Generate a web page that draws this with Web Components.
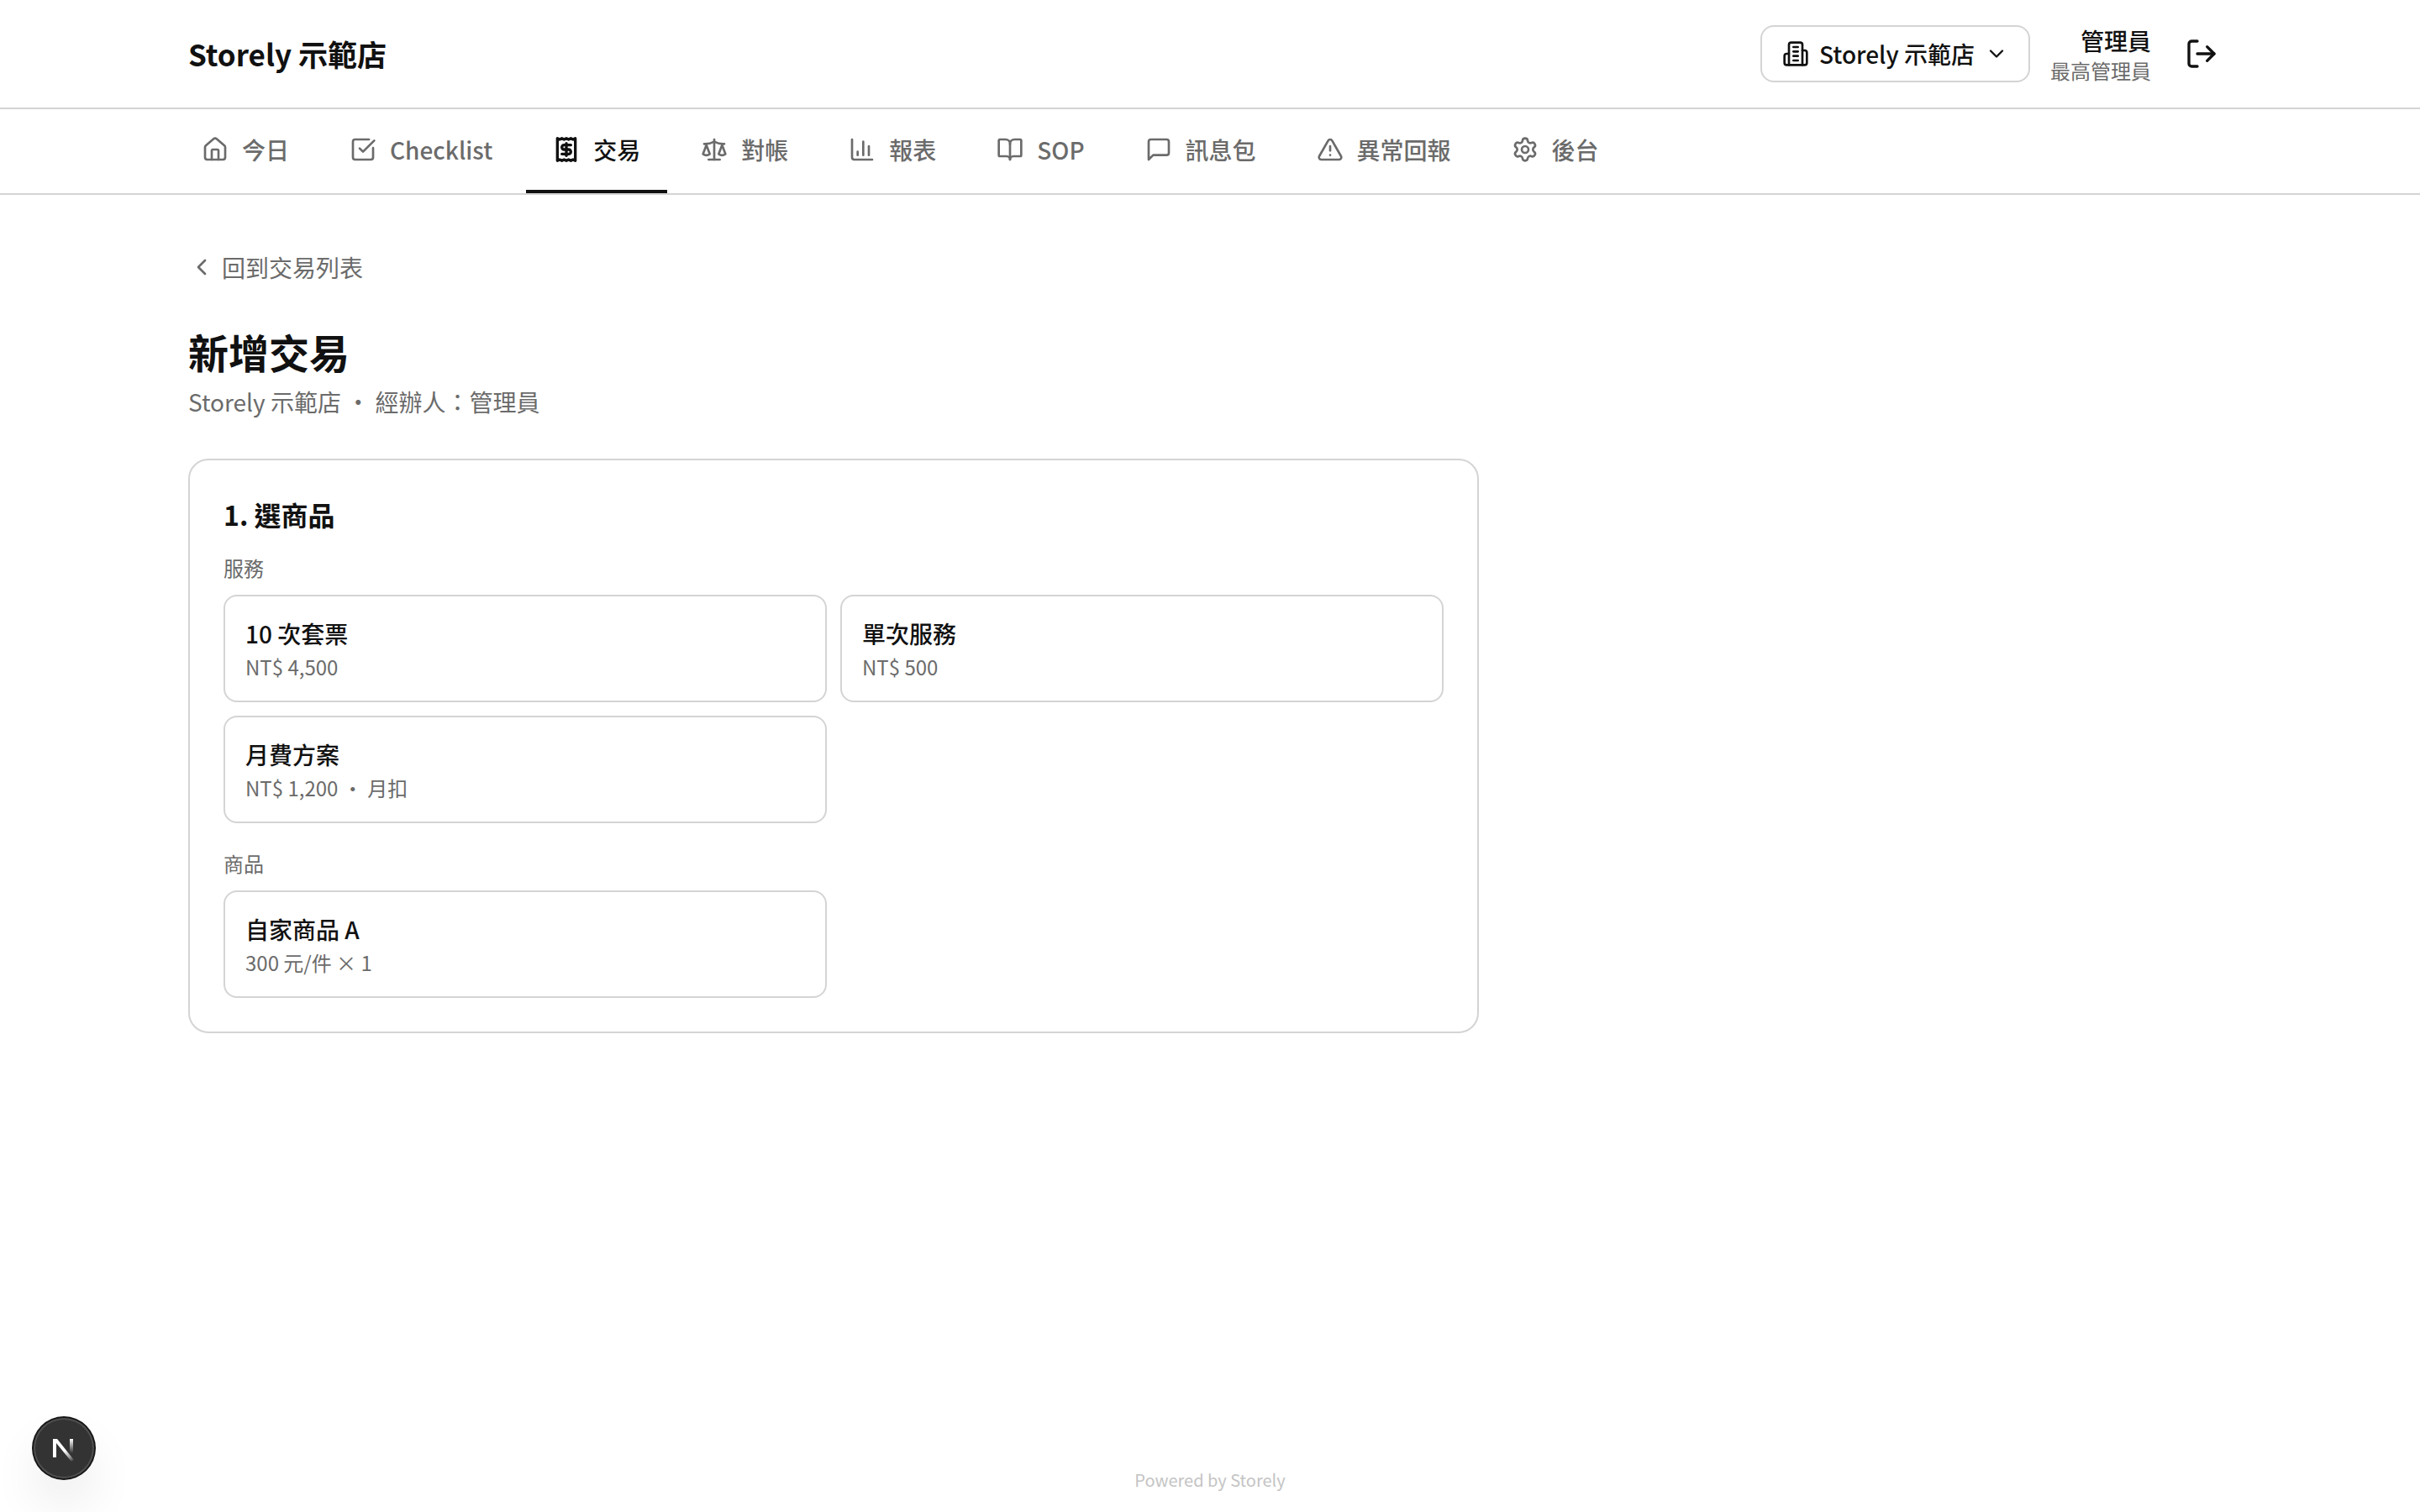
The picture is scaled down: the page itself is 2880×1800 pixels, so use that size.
<!DOCTYPE html>
<html lang="zh-Hant">
<head>
<meta charset="utf-8">
<meta name="viewport" content="width=device-width, initial-scale=1">
<title>新增交易 - Storely 示範店</title>
<style>
  :root {
    --ink: #111111;
    --muted: #6b6b6b;
    --line: #d4d4d4;
    --faint: #c4c4c4;
    --surface: #ffffff;
  }
  body {
    margin: 0;
    min-height: 100vh;
    display: flex;
    flex-direction: column;
    background: var(--surface);
    color: var(--ink);
    font-family: "Noto Sans CJK TC", "Noto Sans", sans-serif;
    font-size: 28px;
    line-height: 40px;
  }
</style>
</head>
<body>
  <app-header store="Storely 示範店" user="管理員" role-name="最高管理員"></app-header>

  <app-nav>
    <nav-tab icon="home" href="#today">今日</nav-tab>
    <nav-tab icon="check" href="#checklist">Checklist</nav-tab>
    <nav-tab icon="receipt" href="#transactions" active>交易</nav-tab>
    <nav-tab icon="scale" href="#reconcile">對帳</nav-tab>
    <nav-tab icon="chart" href="#reports">報表</nav-tab>
    <nav-tab icon="book" href="#sop">SOP</nav-tab>
    <nav-tab icon="message" href="#messages">訊息包</nav-tab>
    <nav-tab icon="alert" href="#incidents">異常回報</nav-tab>
    <nav-tab icon="settings" href="#admin">後台</nav-tab>
  </app-nav>

  <page-main>
    <back-link slot="back" href="#transactions">回到交易列表</back-link>
    <span slot="title">新增交易</span>
    <span slot="subtitle">Storely 示範店 ・ 經辦人：管理員</span>
    <step-card>
      <span slot="title">1. 選商品</span>
      <product-group label="服務">
        <product-option name="10 次套票">NT$ 4,500</product-option>
        <product-option name="單次服務">NT$ 500</product-option>
        <product-option name="月費方案">NT$ 1,200 ・ 月扣</product-option>
      </product-group>
      <product-group label="商品">
        <product-option name="自家商品 A">300 元/件 × 1</product-option>
      </product-group>
    </step-card>
  </page-main>

  <app-footer>Powered by Storely</app-footer>
  <dev-badge></dev-badge>

<script>
const ICONS = {
  home: '<path d="M15 21v-8a1 1 0 0 0-1-1h-4a1 1 0 0 0-1 1v8"/><path d="M3 10a2 2 0 0 1 .709-1.528l7-5.999a2 2 0 0 1 2.582 0l7 5.999A2 2 0 0 1 21 10v9a2 2 0 0 1-2 2H5a2 2 0 0 1-2-2z"/>',
  check: '<path d="M21 10.656V19a2 2 0 0 1-2 2H5a2 2 0 0 1-2-2V5a2 2 0 0 1 2-2h12.344"/><path d="m9 11 3 3L22 4"/>',
  receipt: '<path d="M4 2v20l2-1 2 1 2-1 2 1 2-1 2 1 2-1 2 1V2l-2 1-2-1-2 1-2-1-2 1-2-1-2 1Z"/><path d="M16 8h-6a2 2 0 1 0 0 4h4a2 2 0 1 1 0 4H8"/><path d="M12 17.5v-11"/>',
  scale: '<path d="M12 3v18"/><path d="m19 8 3 8a5 5 0 0 1-6 0zV7"/><path d="M3 7h1a17 17 0 0 0 8-2 17 17 0 0 0 8 2h1"/><path d="m5 8 3 8a5 5 0 0 1-6 0zV7"/><path d="M7 21h10"/>',
  chart: '<path d="M3 3v16a2 2 0 0 0 2 2h16"/><path d="M18 17V9"/><path d="M13 17V5"/><path d="M8 17v-3"/>',
  book: '<path d="M12 7v14"/><path d="M3 18a1 1 0 0 1-1-1V4a1 1 0 0 1 1-1h5a4 4 0 0 1 4 4 4 4 0 0 1 4-4h5a1 1 0 0 1 1 1v13a1 1 0 0 1-1 1h-6a3 3 0 0 0-3 3 3 3 0 0 0-3-3z"/>',
  message: '<path d="M21 15a2 2 0 0 1-2 2H7l-4 4V5a2 2 0 0 1 2-2h14a2 2 0 0 1 2 2z"/>',
  alert: '<path d="m21.73 18-8-14a2 2 0 0 0-3.48 0l-8 14A2 2 0 0 0 4 21h16a2 2 0 0 0 1.73-3"/><path d="M12 9v4"/><path d="M12 17h.01"/>',
  settings: '<path d="M9.671 4.136a2.34 2.34 0 0 1 4.659 0 2.34 2.34 0 0 0 3.319 1.915 2.34 2.34 0 0 1 2.33 4.033 2.34 2.34 0 0 0 0 3.831 2.34 2.34 0 0 1-2.33 4.033 2.34 2.34 0 0 0-3.319 1.915 2.34 2.34 0 0 1-4.659 0 2.34 2.34 0 0 0-3.32-1.915 2.34 2.34 0 0 1-2.33-4.033 2.34 2.34 0 0 0 0-3.831A2.34 2.34 0 0 1 6.35 6.051a2.34 2.34 0 0 0 3.319-1.915"/><circle cx="12" cy="12" r="3"/>',
  building: '<path d="M6 22V4a2 2 0 0 1 2-2h8a2 2 0 0 1 2 2v18Z"/><path d="M6 12H4a2 2 0 0 0-2 2v6a2 2 0 0 0 2 2h2"/><path d="M18 9h2a2 2 0 0 1 2 2v9a2 2 0 0 1-2 2h-2"/><path d="M10 6h4"/><path d="M10 10h4"/><path d="M10 14h4"/><path d="M10 18h4"/>',
  down: '<path d="m6 9 6 6 6-6"/>',
  left: '<path d="m15 18-6-6 6-6"/>',
  logout: '<path d="m16 17 5-5-5-5"/><path d="M21 12H9"/><path d="M9 21H5a2 2 0 0 1-2-2V5a2 2 0 0 1 2-2h4"/>',
};

class LineIcon extends HTMLElement {
  constructor() {
    super();
    this.attachShadow({ mode: "open" });
  }

  connectedCallback() {
    this.shadowRoot.innerHTML = `
      <style>
        :host {
          display: block;
          flex: none;
          width: var(--icon-size, 32px);
          height: var(--icon-size, 32px);
        }
        svg {
          display: block;
          width: 100%;
          height: 100%;
          fill: none;
          stroke: currentColor;
          stroke-width: var(--icon-stroke, 2);
          stroke-linecap: round;
          stroke-linejoin: round;
        }
      </style>
      <svg viewBox="0 0 24 24" aria-hidden="true">${ICONS[this.getAttribute("name")]}</svg>
    `;
  }
}

class AppHeader extends HTMLElement {
  constructor() {
    super();
    this.attachShadow({ mode: "open" });
  }

  connectedCallback() {
    const store = this.getAttribute("store");
    this.shadowRoot.innerHTML = `
      <style>
        :host {
          display: block;
          border-bottom: 2px solid var(--line);
        }
        header {
          box-sizing: border-box;
          max-width: 2560px;
          height: 128px;
          margin: 0 auto;
          padding: 0 64px;
          display: flex;
          align-items: center;
          justify-content: space-between;
        }
        .brand {
          color: inherit;
          text-decoration: none;
          font-size: 35px;
          line-height: 56px;
          font-weight: 600;
        }
        .tools {
          display: flex;
          align-items: center;
          gap: 24px;
        }
        button {
          margin: 0;
          font: inherit;
          color: inherit;
          background: none;
          border: 0;
          cursor: pointer;
        }
        .store {
          display: flex;
          align-items: center;
          gap: 12px;
          padding: 12px 24px;
          border: 2px solid var(--line);
          border-radius: 16px;
          font-weight: 500;
        }
        .down { --icon-size: 28px; }
        .user { text-align: right; }
        .name { font-weight: 500; }
        .role {
          font-size: 24px;
          line-height: 32px;
          color: var(--muted);
        }
        .logout {
          padding: 16px;
          --icon-size: 40px;
        }
      </style>
      <header>
        <a class="brand" href="#home">${store}</a>
        <div class="tools">
          <button class="store" type="button" aria-haspopup="listbox">
            <line-icon name="building"></line-icon>
            <span>${store}</span>
            <line-icon class="down" name="down"></line-icon>
          </button>
          <div class="user">
            <div class="name">${this.getAttribute("user")}</div>
            <div class="role">${this.getAttribute("role-name")}</div>
          </div>
          <button class="logout" type="button" aria-label="登出">
            <line-icon name="logout"></line-icon>
          </button>
        </div>
      </header>
    `;
  }
}

class AppNav extends HTMLElement {
  constructor() {
    super();
    this.attachShadow({ mode: "open" });
    this.shadowRoot.innerHTML = `
      <style>
        :host {
          display: block;
          border-bottom: 2px solid var(--line);
        }
        nav {
          box-sizing: border-box;
          max-width: 2560px;
          margin: 0 auto;
          padding: 0 48px;
          display: flex;
          gap: 8px;
        }
      </style>
      <nav><slot></slot></nav>
    `;
  }
}

class NavTab extends HTMLElement {
  constructor() {
    super();
    this.attachShadow({ mode: "open" });
  }

  connectedCallback() {
    const current = this.hasAttribute("active") ? 'aria-current="page"' : "";
    this.shadowRoot.innerHTML = `
      <style>
        :host {
          display: block;
          color: var(--muted);
          font-weight: 500;
        }
        :host([active]) {
          color: var(--ink);
          --icon-stroke: 2.5;
        }
        a {
          display: flex;
          align-items: center;
          gap: 16px;
          padding: 28px 32px;
          border-bottom: 4px solid transparent;
          color: inherit;
          text-decoration: none;
          white-space: nowrap;
        }
        :host([active]) a { border-color: var(--ink); }
      </style>
      <a href="${this.getAttribute("href")}" ${current}>
        <line-icon name="${this.getAttribute("icon")}"></line-icon>
        <slot></slot>
      </a>
    `;
  }
}

class BackLink extends HTMLElement {
  constructor() {
    super();
    this.attachShadow({ mode: "open" });
  }

  connectedCallback() {
    this.shadowRoot.innerHTML = `
      <style>
        :host { display: flex; }
        a {
          display: flex;
          align-items: center;
          gap: 8px;
          color: var(--muted);
          text-decoration: none;
        }
      </style>
      <a href="${this.getAttribute("href")}">
        <line-icon name="left"></line-icon>
        <slot></slot>
      </a>
    `;
  }
}

class PageMain extends HTMLElement {
  constructor() {
    super();
    this.attachShadow({ mode: "open" });
    this.shadowRoot.innerHTML = `
      <style>
        :host {
          display: block;
          flex: 1;
        }
        main {
          box-sizing: border-box;
          max-width: 2560px;
          margin: 0 auto;
          padding: 66px 64px;
        }
        .column {
          max-width: 1536px;
          display: flex;
          flex-direction: column;
          gap: 48px;
        }
        h1 {
          margin: 0 0 8px;
          font-size: 48px;
          line-height: 64px;
          font-weight: 600;
        }
        p {
          margin: 0;
          color: var(--muted);
        }
      </style>
      <main>
        <div class="column">
          <slot name="back"></slot>
          <div>
            <h1><slot name="title"></slot></h1>
            <p><slot name="subtitle"></slot></p>
          </div>
          <slot></slot>
        </div>
      </main>
    `;
  }
}

class StepCard extends HTMLElement {
  constructor() {
    super();
    this.attachShadow({ mode: "open" });
    this.shadowRoot.innerHTML = `
      <style>
        :host { display: block; }
        section {
          padding: 40px;
          border: 2px solid var(--line);
          border-radius: 24px;
        }
        h2 {
          margin: 0 0 24px;
          font-size: 32px;
          line-height: 48px;
          font-weight: 600;
        }
        .groups {
          display: flex;
          flex-direction: column;
          gap: 32px;
        }
      </style>
      <section>
        <h2><slot name="title"></slot></h2>
        <div class="groups"><slot></slot></div>
      </section>
    `;
  }
}

class ProductGroup extends HTMLElement {
  constructor() {
    super();
    this.attachShadow({ mode: "open" });
  }

  connectedCallback() {
    this.shadowRoot.innerHTML = `
      <style>
        :host { display: block; }
        h3 {
          margin: 0 0 16px;
          font-size: 24px;
          line-height: 32px;
          font-weight: 400;
          color: var(--muted);
        }
        .grid {
          display: grid;
          grid-template-columns: 1fr 1fr;
          gap: 16px;
        }
      </style>
      <h3>${this.getAttribute("label")}</h3>
      <div class="grid"><slot></slot></div>
    `;
  }
}

class ProductOption extends HTMLElement {
  constructor() {
    super();
    this.attachShadow({ mode: "open" });
  }

  connectedCallback() {
    this.shadowRoot.innerHTML = `
      <style>
        :host { display: block; }
        button {
          display: flex;
          flex-direction: column;
          gap: 4px;
          width: 100%;
          margin: 0;
          padding: 24px;
          border: 2px solid var(--line);
          border-radius: 16px;
          background: none;
          font: inherit;
          color: inherit;
          text-align: left;
          cursor: pointer;
        }
        .name { font-weight: 500; }
        .price {
          font-size: 24px;
          line-height: 32px;
          color: var(--muted);
        }
      </style>
      <button type="button">
        <span class="name">${this.getAttribute("name")}</span>
        <span class="price"><slot></slot></span>
      </button>
    `;
  }
}

class AppFooter extends HTMLElement {
  constructor() {
    super();
    this.attachShadow({ mode: "open" });
    this.shadowRoot.innerHTML = `
      <style>
        :host { display: block; }
        footer {
          padding: 24px;
          text-align: center;
          font-size: 20px;
          line-height: 28px;
          color: var(--faint);
        }
      </style>
      <footer><slot></slot></footer>
    `;
  }
}

// floating button in the bottom left corner, stays over the page
class DevBadge extends HTMLElement {
  constructor() {
    super();
    this.attachShadow({ mode: "open" });
    this.shadowRoot.innerHTML = `
      <style>
        :host {
          position: fixed;
          left: 40px;
          bottom: 40px;
        }
        button {
          display: block;
          width: 72px;
          height: 72px;
          padding: 0;
          border: 0;
          border-radius: 50%;
          background: #333333;
          box-shadow:
            0 0 0 2px #171717,
            inset 0 0 0 2px rgba(255, 255, 255, 0.14),
            0 32px 64px -16px rgba(0, 0, 0, 0.24);
          cursor: pointer;
        }
        svg { display: block; }
      </style>
      <button type="button" aria-label="Open developer tools">
        <svg width="72" height="72" viewBox="0 0 72 72" fill="none" stroke-width="4" aria-hidden="true">
          <defs>
            <linearGradient id="diag" gradientUnits="userSpaceOnUse" x1="37" y1="39" x2="47" y2="52">
              <stop stop-color="#fff"/>
              <stop offset="0.6" stop-color="#fff" stop-opacity="0.5"/>
              <stop offset="1" stop-color="#fff" stop-opacity="0"/>
            </linearGradient>
            <linearGradient id="stem" gradientUnits="userSpaceOnUse" x1="45" y1="25" x2="45" y2="42">
              <stop stop-color="#fff"/>
              <stop offset="1" stop-color="#fff" stop-opacity="0"/>
            </linearGradient>
          </defs>
          <path d="M23 25h5L48 50l-3 2L27 30v17h-4z" fill="url(#diag)"/>
          <path d="M45 25v17" stroke="url(#stem)"/>
        </svg>
      </button>
    `;
  }
}

customElements.define("line-icon", LineIcon);
customElements.define("app-header", AppHeader);
customElements.define("app-nav", AppNav);
customElements.define("nav-tab", NavTab);
customElements.define("back-link", BackLink);
customElements.define("page-main", PageMain);
customElements.define("step-card", StepCard);
customElements.define("product-group", ProductGroup);
customElements.define("product-option", ProductOption);
customElements.define("app-footer", AppFooter);
customElements.define("dev-badge", DevBadge);
</script>
</body>
</html>
